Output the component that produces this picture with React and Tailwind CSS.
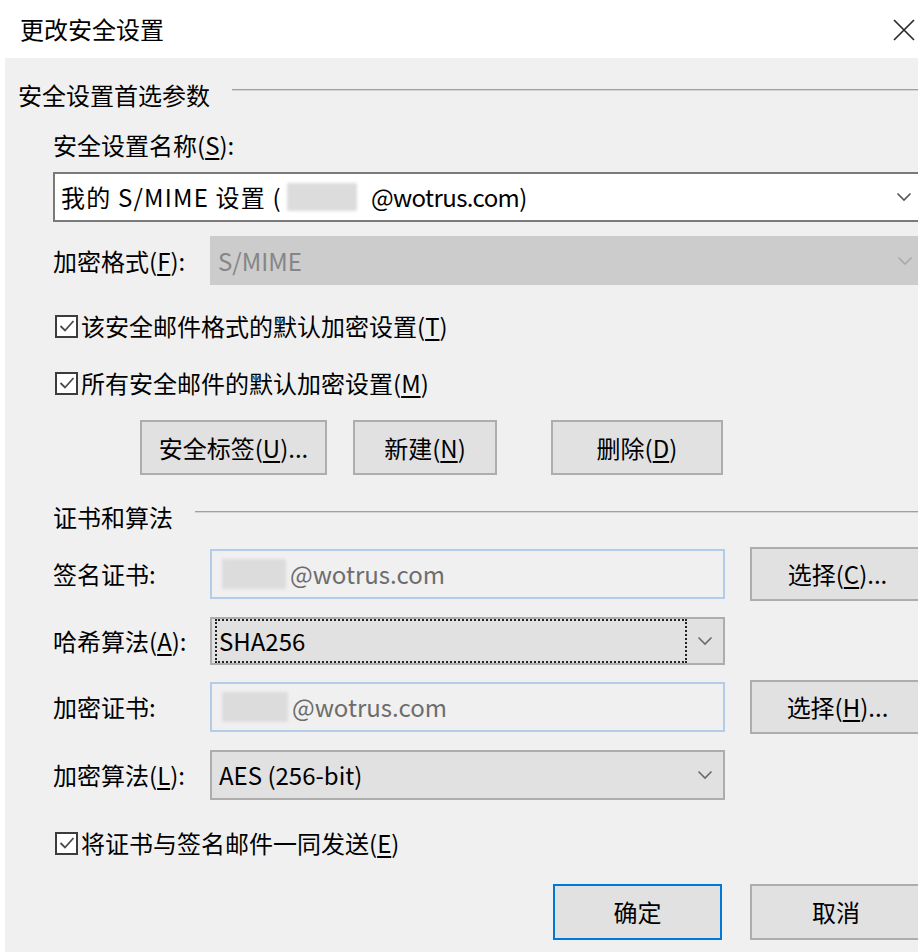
import React from 'react';

// underlined access key inside a label, e.g. (S)
function Key({ children }) {
    return <span className="underline underline-offset-[3px] decoration-[1.5px]">{children}</span>;
}

function Chevron({ className = '' }) {
    return (
        <svg width="16" height="10" viewBox="0 0 16 10" className={className}>
            <path d="M1.5 1.5 L8 8 L14.5 1.5" fill="none" stroke="currentColor" strokeWidth="1.6" />
        </svg>
    );
}

function Checkbox({ children }) {
    return (
        <div className="flex items-center h-[30px]">
            <div className="w-[23px] h-[23px] ml-[2px] border-2 border-[#3c3c3c] bg-white flex items-center justify-center shrink-0">
                <svg width="16" height="14" viewBox="0 0 16 14">
                    <path d="M1.5 7 L6 11.5 L14.5 2" fill="none" stroke="#4a4a4a" strokeWidth="1.8" />
                </svg>
            </div>
            <span className="ml-[3px] leading-none">{children}</span>
        </div>
    );
}

function Button({ children, isDefault, className = '' }) {
    const edge = isDefault ? 'border-[#0078d7]' : 'border-[#adadad]';
    return (
        <div className={`h-full bg-[#e1e1e1] border-2 ${edge} flex items-center justify-center shrink-0 leading-none ${className}`}>
            {children}
        </div>
    );
}

function GroupHeader({ title, className = '' }) {
    return (
        <div className={`flex h-[30px] ${className}`}>
            <span className="h-[30px] flex items-center leading-none shrink-0">{title}</span>
            <div className="flex-1 ml-[22px] mt-[9px] h-[1px] bg-[#a0a0a0] border-b border-[#d4d4d4] box-content" />
        </div>
    );
}

// greyed-out blur that hides the mailbox name
function Redacted({ className = '' }) {
    return <span className={`inline-block bg-[#dcdcdc] blur-[1.5px] rounded-[2px] ${className}`} />;
}

function ReadonlyBox({ blur }) {
    return (
        <div className="w-[515px] h-[50px] bg-[#f0f0f0] border-2 border-[#b3cde8] flex items-center pl-[10px] text-[#6d6d6d] shrink-0">
            <Redacted className={blur} />
            <span className="ml-[4px] leading-none">@wotrus.com</span>
        </div>
    );
}

function Combo({ children, focused, className = '' }) {
    return (
        <div className={`w-[515px] bg-[#e1e1e1] border-2 border-[#adadad] flex items-center shrink-0 ${className}`}>
            <div className={`flex-1 h-full my-[3px] ml-[3px] flex items-center pl-[2px] leading-none ${focused ? 'border-2 border-dotted border-[#222]' : 'pl-[4px]'}`}>
                {children}
            </div>
            <div className="w-[36px] flex items-center justify-center text-[#6a6a6a]">
                <Chevron />
            </div>
        </div>
    );
}

export default function App() {
    return (
        <div className="w-[918px] h-[952px] bg-white flex flex-col overflow-hidden text-[24px] text-black font-['Noto_Sans_CJK_SC','Noto_Sans',sans-serif]">
            {/* title bar */}
            <div className="h-[58px] flex items-center justify-between pl-[20px] shrink-0">
                <span className="leading-none">更改安全设置</span>
                <svg width="24" height="24" viewBox="0 0 24 24" className="mr-[2px] mt-[2px]">
                    <path d="M2 2 L22 22 M22 2 L2 22" stroke="#2b2b2b" strokeWidth="1.7" />
                </svg>
            </div>

            <div className="flex-1 ml-[5px] bg-[#f0f0f0] flex flex-col">
                <GroupHeader title="安全设置首选参数" className="mt-[22px] pl-[13px]" />

                <div className="pl-[48px] flex flex-col">
                    <div className="mt-[20px] h-[30px] flex items-center leading-none">
                        <span>安全设置名称(<Key>S</Key>):</span>
                    </div>

                    {/* settings name */}
                    <div className="mt-[12px] w-[880px] h-[50px] bg-white border-2 border-[#7a7a7a] flex items-center pl-[6px] shrink-0">
                        <span className="leading-none whitespace-pre tracking-[1.2px]">我的 S/MIME 设置 (</span>
                        <Redacted className="w-[70px] h-[28px] ml-[5px]" />
                        <span className="leading-none ml-[14px] tracking-[-0.6px]">@wotrus.com)</span>
                        <Chevron className="ml-auto mr-[19px] text-[#555]" />
                    </div>

                    {/* format, disabled */}
                    <div className="mt-[14px] h-[49px] flex items-center">
                        <span className="w-[157px] shrink-0 leading-none">加密格式(<Key>F</Key>):</span>
                        <div className="w-[722px] h-full bg-[#cccccc] flex items-center pl-[8px] text-[#868686] shrink-0">
                            <span className="leading-none">S/MIME</span>
                            <Chevron className="ml-auto mr-[19px] text-[#a9a9a9]" />
                        </div>
                    </div>

                    <div className="mt-[26px]">
                        <Checkbox>该安全邮件格式的默认加密设置(<Key>T</Key>)</Checkbox>
                    </div>
                    <div className="mt-[27px]">
                        <Checkbox>所有安全邮件的默认加密设置(<Key>M</Key>)</Checkbox>
                    </div>

                    <div className="mt-[22px] h-[55px] flex pl-[87px]">
                        <Button className="w-[187px]">安全标签(<Key>U</Key>)...</Button>
                        <Button className="w-[144px] ml-[26px]">新建(<Key>N</Key>)</Button>
                        <Button className="w-[172px] ml-[54px]">删除(<Key>D</Key>)</Button>
                    </div>

                    <GroupHeader title="证书和算法" className="mt-[27px]" />

                    {/* signing certificate */}
                    <div className="mt-[15px] h-[54px] flex items-center">
                        <span className="w-[157px] shrink-0 leading-none">签名证书:</span>
                        <ReadonlyBox blur="w-[64px] h-[30px]" />
                        <Button className="w-[175px] ml-[25px]">选择(<Key>C</Key>)...</Button>
                    </div>

                    <div className="mt-[16px] h-[48px] flex items-center">
                        <span className="w-[157px] shrink-0 leading-none">哈希算法(<Key>A</Key>):</span>
                        <Combo focused className="h-full">SHA256</Combo>
                    </div>

                    {/* encryption certificate */}
                    <div className="mt-[15px] h-[54px] flex items-center">
                        <span className="w-[157px] shrink-0 leading-none">加密证书:</span>
                        <ReadonlyBox blur="w-[66px] h-[30px]" />
                        <Button className="w-[175px] ml-[25px]">选择(<Key>H</Key>)...</Button>
                    </div>

                    <div className="mt-[16px] h-[50px] flex items-center">
                        <span className="w-[157px] shrink-0 leading-none">加密算法(<Key>L</Key>):</span>
                        <Combo className="h-full">AES (256-bit)</Combo>
                    </div>

                    <div className="mt-[28px]">
                        <Checkbox>将证书与签名邮件一同发送(<Key>E</Key>)</Checkbox>
                    </div>

                    <div className="mt-[26px] h-[56px] flex pl-[500px]">
                        <Button isDefault className="w-[169px]">确定</Button>
                        <Button className="w-[172px] ml-[28px]">取消</Button>
                    </div>
                </div>
            </div>
        </div>
    );
}
